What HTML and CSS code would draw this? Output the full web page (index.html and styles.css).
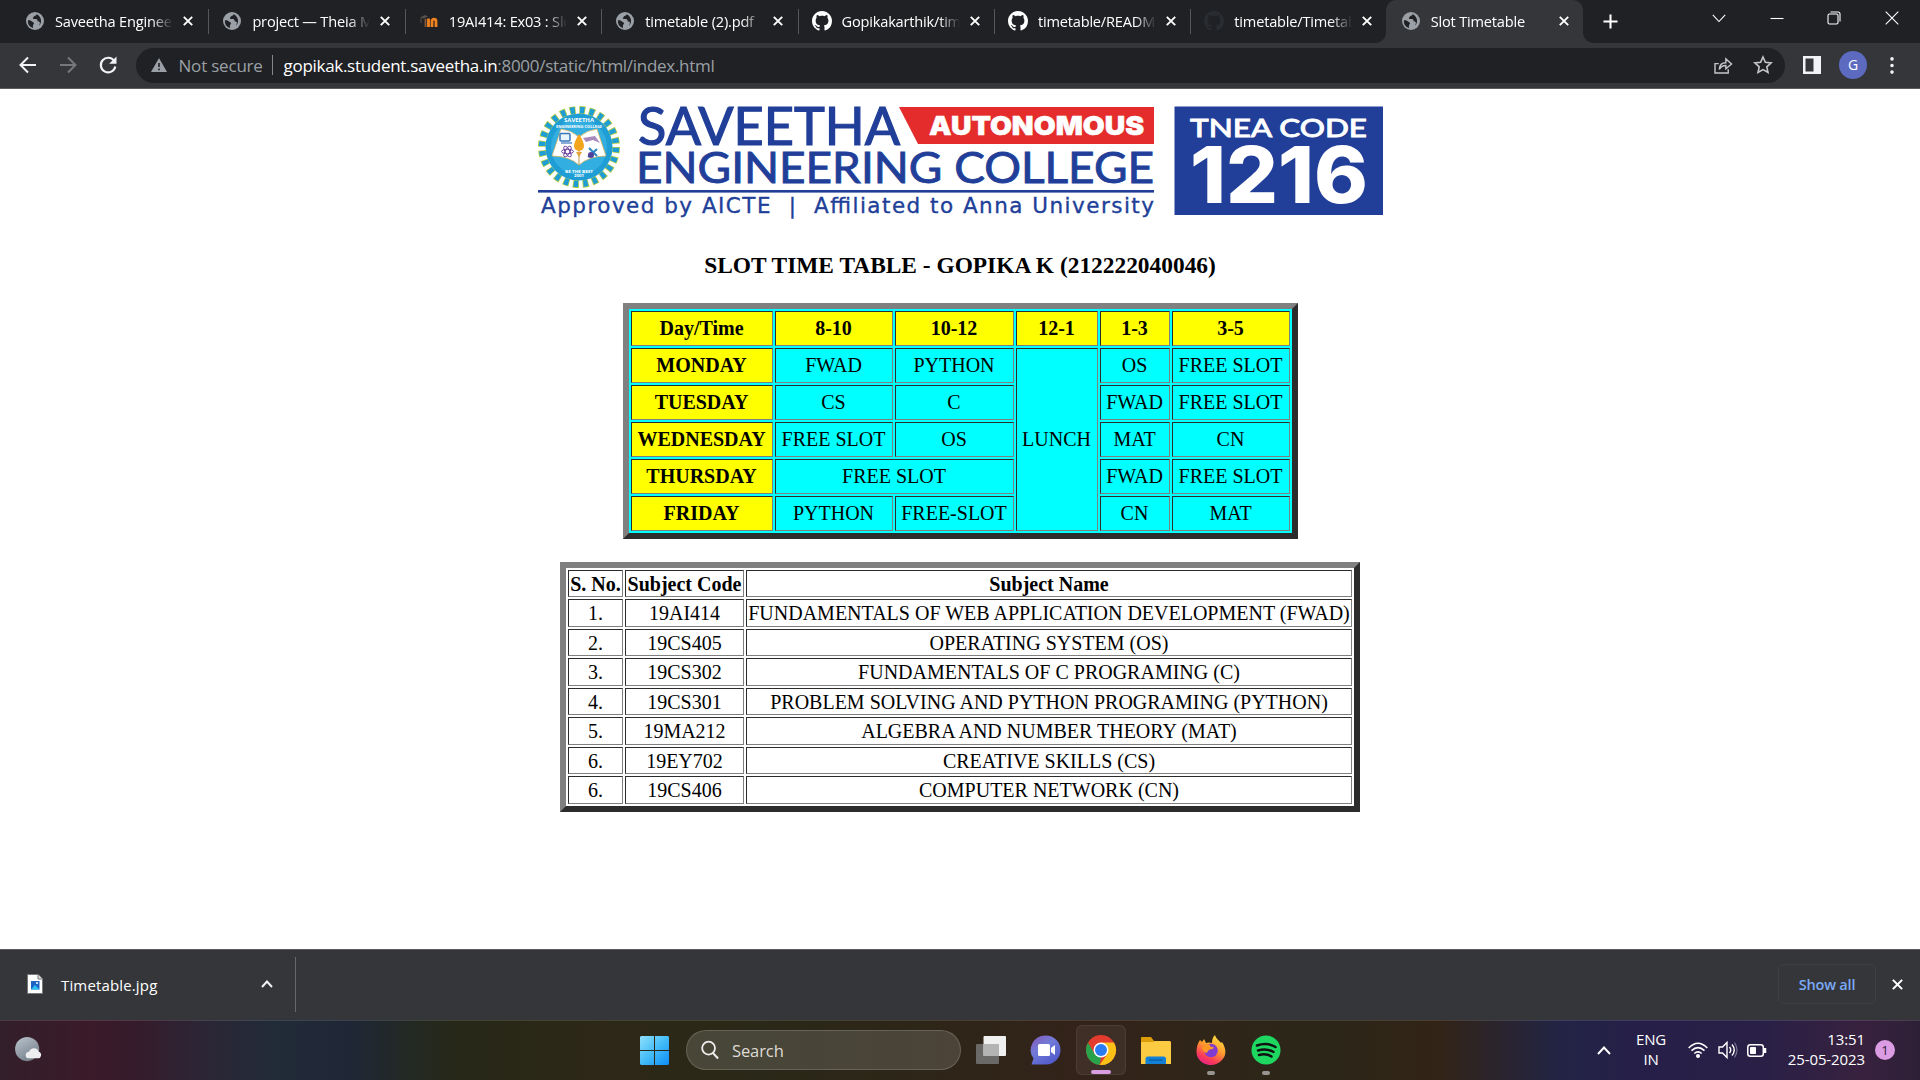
FILE: index.html
```html
<!DOCTYPE html>
<html lang="en">
<head>
<meta charset="utf-8">
<title>Slot Timetable</title>
<link rel="stylesheet" href="styles.css">
</head>
<body>
<svg class="defs" aria-hidden="true">
  <symbol id="globe" viewBox="0 0 18 18"><circle cx="9" cy="9" r="9" fill="#9aa0a6"/><path d="M2 8.2c1.8-.1 3 .3 4 1.300.8.8 2 .8 2 2-.1 1-1.200 1.200-1.100 2.300l.1 2.100A7.200 7.200 0 0 1 2 8.200zM10.500 2.200c-.2 1-1 1.500-2 1.700-.9.2-.6 1.200-1.300 1.700-.6.5-.4 1.400.6 1.400h2.400c1 .1 1.400 1 1.400 1.800 0 .7.700.9 1.400.9.800 0 1.100.8.800 1.500l-.7 2.600A7.200 7.200 0 0 0 10.500 2.200z" fill="#202124"/></symbol>
  <symbol id="github" viewBox="0 0 16 16"><path d="M8 0C3.58 0 0 3.58 0 8c0 3.540 2.290 6.530 5.470 7.590.4.070.55-.17.55-.38 0-.19-.01-.82-.01-1.490-2.010.37-2.530-.49-2.690-.94-.09-.23-.48-.94-.82-1.130-.28-.15-.68-.52-.01-.53.63-.01 1.080.58 1.230.82.72 1.210 1.870.87 2.330.66.07-.52.28-.87.51-1.070-1.780-.2-3.640-.89-3.640-3.950 0-.87.31-1.590.82-2.150-.08-.2-.36-1.020.08-2.120 0 0 .67-.21 2.200.82.64-.18 1.320-.27 2-.27s1.360.09 2 .27c1.530-1.040 2.200-.82 2.200-.82.44 1.100.16 1.920.08 2.120.51.56.82 1.270.82 2.150 0 3.070-1.870 3.750-3.650 3.950.29.25.54.73.54 1.480 0 1.070-.01 1.930-.01 2.200 0 .21.15.46.55.38A8.010 8.010 0 0 0 16 8c0-4.420-3.580-8-8-8z" fill="currentColor"/></symbol>
  <symbol id="x" viewBox="0 0 10 10"><path d="M.8.8l8.400 8.400M9.200.8L.8 9.200" stroke="currentColor" stroke-width="1.900" fill="none"/></symbol>
</svg>

<header class="tabs">
  <div class="tab first"><svg class="fav"><use href="#globe"/></svg><span class="title">Saveetha Engineering</span><svg class="close"><use href="#x"/></svg></div>
  <div class="tab"><svg class="fav"><use href="#globe"/></svg><span class="title">project — Theia Mini</span><svg class="close"><use href="#x"/></svg></div>
  <div class="tab"><svg class="fav" viewBox="0 0 18 18"><path d="M0 5.500L5 3l3 1.500-4 2z" fill="#55504c"/><path d="M1 6v5" stroke="#55504c"/><path d="M5.500 15V7" fill="none" stroke="#8b5a35" stroke-width="1.800"/><path d="M8.500 15V6.500M12 15V9.200q0-2 2-2t2 2V15" fill="none" stroke="#f08220" stroke-width="2.800"/></svg><span class="title">19AI414: Ex03 : Slot</span><svg class="close"><use href="#x"/></svg></div>
  <div class="tab"><svg class="fav"><use href="#globe"/></svg><span class="title">timetable (2).pdf</span><svg class="close"><use href="#x"/></svg></div>
  <div class="tab"><svg class="fav hub"><use href="#github"/></svg><span class="title">Gopikakarthik/timetable</span><svg class="close"><use href="#x"/></svg></div>
  <div class="tab"><svg class="fav hub"><use href="#github"/></svg><span class="title">timetable/README</span><svg class="close"><use href="#x"/></svg></div>
  <div class="tab last"><svg class="fav hub dim"><use href="#github"/></svg><span class="title">timetable/Timetable</span><svg class="close"><use href="#x"/></svg></div>
  <div class="tab active"><svg class="fav"><use href="#globe"/></svg><span class="title">Slot Timetable</span><svg class="close"><use href="#x"/></svg></div>
  <svg class="plus" viewBox="0 0 16 16"><path d="M8 .5v15M.5 8h15" stroke="#fff" stroke-width="2.200"/></svg>
  <div class="window">
    <svg viewBox="0 0 14 14"><path d="M.8 3.800L7 10.500l6.200-6.700"/></svg>
    <svg viewBox="0 0 14 14"><path d="M.5 7.500h13"/></svg>
    <svg viewBox="0 0 14 14"><rect x="1" y="3" width="10" height="10" rx="1.500"/><path d="M3.500 1h7.500q2 0 2 2v7.500"/></svg>
    <svg viewBox="0 0 14 14"><path d="M.7.7l12.600 12.600M13.300.7L.7 13.300"/></svg>
  </div>
</header>

<nav class="toolbar">
  <svg class="nav" viewBox="0 0 18 18"><path d="M17 9H2M9 1.500L1.500 9 9 16.500" stroke="#f1f3f4" stroke-width="2" fill="none"/></svg>
  <svg class="nav" viewBox="0 0 18 18"><path d="M1 9h15M9 1.500L16.500 9 9 16.500" stroke="#76787c" stroke-width="2" fill="none"/></svg>
  <svg class="nav" viewBox="0 0 18 18"><path d="M15.200 5A7.300 7.300 0 1 0 16.300 10.500" stroke="#f1f3f4" stroke-width="2.100" fill="none"/><path d="M17.500.5v7.300h-7.300z" fill="#f1f3f4"/></svg>
  <div class="omnibox">
    <svg class="warn" viewBox="0 0 16 14"><path d="M8 0l8 14H0z" fill="#9aa0a6"/><path d="M8 5v4M8 10.500v1.800" stroke="#202124" stroke-width="1.600"/></svg>
    <span class="insecure">Not secure</span>
    <span class="bar"></span>
    <span class="url"><b>gopikak.student.saveetha.in</b>:8000/static/html/index.html</span>
    <svg class="share" viewBox="0 0 20 18"><path d="M5 7H1v10h14v-4M5.500 13q.5-7 7-7V2l6 5.500-6 5V9q-4.500 0-7 4z" fill="none" stroke="#c4c7ca" stroke-width="1.500"/></svg>
    <svg class="star" viewBox="0 0 20 20"><path d="M10 2l2.400 5.300 5.700.6-4.300 3.900 1.200 5.700-5-2.900-5 2.900 1.200-5.700L1.900 7.900l5.700-.6z" fill="none" stroke="#c4c7ca" stroke-width="1.600"/></svg>
  </div>
  <svg class="panel" viewBox="0 0 18 18"><path d="M0 0h18v18H0zM2.500 2.500v13h8v-13z" fill="#f1f3f4" fill-rule="evenodd"/></svg>
  <span class="avatar">G</span>
  <svg class="dots" viewBox="0 0 4 18"><path d="M2 2h0M2 9h0M2 16h0" stroke="#f1f3f4" stroke-width="3.800" stroke-linecap="round"/></svg>
</nav>

<main class="page">
  <svg class="banner" viewBox="530 98 860 126">
    <g>
      <circle cx="579" cy="147" r="37" fill="none" stroke="#b8cf45" stroke-width="8" stroke-dasharray="6 3.687"/>
      <circle cx="579" cy="147" r="37" fill="none" stroke="#1f9dd5" stroke-width="6.400" stroke-dasharray="4.400 5.287" stroke-dashoffset="-.8"/>
      <circle cx="579" cy="147" r="33.500" fill="#1f9dd5"/>
      <circle cx="579" cy="147" r="28" fill="#33aee0"/>
      <path d="M579 137q-8-7-18-8l-9 27q17 0 27 9 10-9 27-9l-9-27q-10 1-18 8z" fill="#fff" stroke="#d4b565" stroke-width=".8"/>
      <path d="M579 137v28" stroke="#c0954a"/>
      <path d="M579 134q-5 8-5 12a5 5 0 0 0 10 0q0-4-5-12z" fill="#f3a51e"/><path d="M576 152l3 5 3-5z" fill="#e5a33b"/>
      <rect x="560" y="133.500" width="10" height="7.500" rx="1" fill="#e9f6fc" stroke="#3977bc" stroke-width="1.500"/><path d="M561 143h11" stroke="#3977bc" stroke-width="1.200"/>
      <g fill="none" stroke="#64359a" stroke-width=".9"><ellipse cx="567.500" cy="151.500" rx="6" ry="2.200"/><ellipse cx="567.500" cy="151.500" rx="6" ry="2.200" transform="rotate(60 567.500 151.500)"/><ellipse cx="567.500" cy="151.500" rx="6" ry="2.200" transform="rotate(120 567.500 151.500)"/></g>
      <path d="M583 138l12-2 5 7-7-3-7 2z" fill="#8b62a8" opacity=".75"/>
      <path d="M589 148l8 8M597 149l-9 8" stroke="#2a83c5" stroke-width="2"/><circle cx="591" cy="155" r="3" fill="#51409b"/>
      <g class="seal"><text x="564" y="122" textLength="30" lengthAdjust="spacingAndGlyphs">SAVEETHA</text><text x="556" y="127.500" class="tiny" textLength="46" lengthAdjust="spacingAndGlyphs">ENGINEERING COLLEGE</text><text x="565" y="172.500" class="tiny" textLength="28" lengthAdjust="spacingAndGlyphs">BE THE BEST</text><text x="574" y="177" class="tiny" textLength="10" lengthAdjust="spacingAndGlyphs">2001</text></g>
    </g>
    <g fill="#213f99">
      <text class="name" x="638" y="145" textLength="262" lengthAdjust="spacingAndGlyphs">SAVEETHA</text>
      <text class="college" x="636" y="183" textLength="518" lengthAdjust="spacingAndGlyphs">ENGINEERING COLLEGE</text>
      <rect x="538" y="190" width="616" height="2.600"/>
      <text class="approved" x="541" y="213" textLength="613">Approved by AICTE&#160; |&#160; Affiliated to Anna University</text>
      <rect x="1174.500" y="106.500" width="208.500" height="108.500"/>
    </g>
    <path d="M899 107h255v37H918z" fill="#e32c2b"/>
    <g fill="#fff">
      <text class="auto" x="929" y="135" textLength="215" lengthAdjust="spacingAndGlyphs">AUTONOMOUS</text>
      <text class="tnea" x="1190" y="136.500" textLength="177" lengthAdjust="spacingAndGlyphs">TNEA CODE</text>
      <text class="code" x="1190" y="203" textLength="178" lengthAdjust="spacingAndGlyphs">1216</text>
    </g>
  </svg>

  <h1>SLOT TIME TABLE - GOPIKA K (212222040046)</h1>

  <table class="slots">
    <colgroup><col class="c142"><col class="c118"><col class="c119"><col class="c82"><col class="c70"><col class="c118"></colgroup>
    <tr><th>Day/Time</th><th>8-10</th><th>10-12</th><th>12-1</th><th>1-3</th><th>3-5</th></tr>
    <tr><th>MONDAY</th><td>FWAD</td><td>PYTHON</td><td rowspan="5">LUNCH</td><td>OS</td><td>FREE SLOT</td></tr>
    <tr><th>TUESDAY</th><td>CS</td><td>C</td><td>FWAD</td><td>FREE SLOT</td></tr>
    <tr><th>WEDNESDAY</th><td>FREE SLOT</td><td>OS</td><td>MAT</td><td>CN</td></tr>
    <tr><th>THURSDAY</th><td colspan="2">FREE SLOT</td><td>FWAD</td><td>FREE SLOT</td></tr>
    <tr><th>FRIDAY</th><td>PYTHON</td><td>FREE-SLOT</td><td>CN</td><td>MAT</td></tr>
  </table>

  <table class="subjects">
    <colgroup><col class="c55"><col class="c119"><col class="c606"></colgroup>
    <tr><th>S. No.</th><th>Subject Code</th><th>Subject Name</th></tr>
    <tr><td>1.</td><td>19AI414</td><td>FUNDAMENTALS OF WEB APPLICATION DEVELOPMENT (FWAD)</td></tr>
    <tr><td>2.</td><td>19CS405</td><td>OPERATING SYSTEM (OS)</td></tr>
    <tr><td>3.</td><td>19CS302</td><td>FUNDAMENTALS OF C PROGRAMING (C)</td></tr>
    <tr><td>4.</td><td>19CS301</td><td>PROBLEM SOLVING AND PYTHON PROGRAMING (PYTHON)</td></tr>
    <tr><td>5.</td><td>19MA212</td><td>ALGEBRA AND NUMBER THEORY (MAT)</td></tr>
    <tr><td>6.</td><td>19EY702</td><td>CREATIVE SKILLS (CS)</td></tr>
    <tr><td>6.</td><td>19CS406</td><td>COMPUTER NETWORK (CN)</td></tr>
  </table>
</main>

<section class="downloads">
  <svg class="file" viewBox="0 0 16 20"><path d="M.5.5h10.500l4.500 4.500v14.500H.5z" fill="#fff" stroke="#777"/><path d="M11 .5V5h4.500" fill="#ddd" stroke="#777"/><rect x="4" y="7" width="8.500" height="8.500" fill="#1e62c4"/><path d="M4 15.500l4-4.500 4.500 4.500z" fill="#28c3f3"/><circle cx="10" cy="9" r="1" fill="#fff"/></svg>
  <span class="filename">Timetable.jpg</span>
  <svg class="up" viewBox="0 0 12 8"><path d="M1 7l5-5.500L11 7" fill="none" stroke="#f1f3f4" stroke-width="2"/></svg>
  <span class="rule"></span>
  <button class="showall">Show all</button>
  <svg class="dismiss"><use href="#x"/></svg>
</section>

<footer class="taskbar">
  <svg class="weather" viewBox="0 0 30 28"><defs><linearGradient id="moon" x2=".6" y2="1"><stop stop-color="#bcc5ce"/><stop offset="1" stop-color="#76818c"/></linearGradient></defs><circle cx="13" cy="13" r="13" fill="url(#moon)"/><path d="M14 23q-3-1-2.500-4t3.500-3q1.500-4 5.500-4t5 4q3 1 2.500 4t-3 3z" fill="#eceef0"/></svg>
  <div class="apps">
    <svg class="start" viewBox="0 0 29 29"><defs><linearGradient id="win" x2="1" y2="1"><stop stop-color="#8ee0fb"/><stop offset=".5" stop-color="#45bdf8"/><stop offset="1" stop-color="#0c8cf6"/></linearGradient></defs><path d="M1 0h13v14H0V1zM15 0h13l1 1v13H15zM0 15h14v14H1l-1-1zM15 15h14v13l-1 1H15z" fill="url(#win)"/></svg>
    <div class="search"><svg viewBox="0 0 19 20"><circle cx="8" cy="8" r="6.800" fill="none" stroke="#eee" stroke-width="1.900"/><path d="M12.500 13l5.500 6" stroke="#eee" stroke-width="2.200"/></svg><span>Search</span></div>
    <svg class="app" viewBox="0 0 30 30"><rect y="9" width="23" height="20" rx="1" fill="#6a6967"/><rect x="7.500" y="1" width="22.500" height="20" rx="1" fill="#f0f0f0"/><path d="M7.500 9H23v12H7.500z" fill="#b4b4b4"/></svg>
    <svg class="app chat" viewBox="0 0 30 30"><defs><linearGradient id="chat" x1="0" y1="0" x2=".7" y2="1"><stop stop-color="#8756b5"/><stop offset=".45" stop-color="#727bd8"/><stop offset="1" stop-color="#5059c9"/></linearGradient></defs><path d="M15 .5a14.500 14.500 0 0 1 0 29H.5l2-6A14.500 14.500 0 0 1 15 .5z" fill="url(#chat)"/><rect x="7" y="9" width="12" height="12" rx="1.500" fill="#fff"/><path d="M20 13l4-3v10l-4-3z" fill="#fff"/></svg>
    <div class="current"><svg class="app" viewBox="0 0 30 30"><circle cx="15" cy="15" r="15" fill="#e33b2e"/><path d="M2 7.500l6.500 11.300L15 22.500 13.500 30A15 15 0 0 1 2 7.500z" fill="#29a34b"/><path d="M28 7.500H15l6.500 11.300L13.500 30A15 15 0 0 0 28 7.500z" fill="#fbc116"/><circle cx="15" cy="15" r="7.500" fill="#fff"/><circle cx="15" cy="15" r="6" fill="#2a7cf0"/></svg><i></i></div>
    <svg class="app" viewBox="0 0 30 30"><path d="M0 3q0-1 1-1h9l3 4h16v7H0z" fill="#dc9d08"/><path d="M0 8q0-1 1-1h11l2-1h15l1 1v22H0z" fill="#fccb41"/><path d="M4.500 29v-5q0-2.500 2.500-2.500h15.500q2.500 0 2.500 2.500v5z" fill="#1280d5"/><path d="M8 25h13.500" stroke="#075291"/></svg>
    <div class="running"><svg class="app" viewBox="0 0 30 30"><defs><linearGradient id="fox" x1=".8" y1="0" x2=".3" y2="1"><stop stop-color="#ffe545"/><stop offset=".45" stop-color="#ff9b2d"/><stop offset=".8" stop-color="#fa385b"/><stop offset="1" stop-color="#e62388"/></linearGradient></defs><path d="M4 5l2 2 2-3 2 4q3-1 6 0c0-4 1-6 3-8 1 4 5 6 6 8l1-1c4 6 5 13 0 18-7 8-19 6-24-2C-1 17 1 9 4 5z" fill="url(#fox)"/><circle cx="15" cy="15.500" r="6.800" fill="#823bd0"/><path d="M6 12l7-3 2 3q4-1 2 2-5 0-6 4-5-1-5-6z" fill="#ff9726"/></svg><i></i></div>
    <div class="running"><svg class="app" viewBox="0 0 30 30"><circle cx="15" cy="15" r="14.500" fill="#1ed760"/><path d="M6 10.500q10-3.500 18.500 1.500M7 15.500q8.500-2.500 15.500 1.500M8 20q7-2 12.500 1.500" fill="none" stroke="#111" stroke-width="2.500" stroke-linecap="round"/></svg><i></i></div>
  </div>
  <div class="tray">
    <svg class="trayup" viewBox="0 0 14 9"><path d="M1 8l6-6.500L13 8" fill="none" stroke="#fff" stroke-width="1.900"/></svg>
    <div class="lang">ENG<br>IN</div>
    <svg class="wifi" viewBox="0 0 20 16"><g fill="none" stroke="#fff" stroke-width="1.600"><path d="M.7 6Q10-3.500 19.300 6M3.500 8.700q6.500-6 13 0M6.300 11.500q3.700-3.300 7.400 0"/></g><circle cx="10" cy="14" r="2" fill="#fff"/></svg>
    <svg class="sound" viewBox="0 0 20 18"><path d="M1 6h3.500L9 1.500v15L4.500 12H1z" fill="none" stroke="#fff" stroke-width="1.400"/><path d="M11.500 6q2.500 3 0 6M14 3.500q4.500 5.500 0 11" fill="none" stroke="#fff" stroke-width="1.400"/><path d="M16.500 1.500q5 7.500 0 15" fill="none" stroke="#777391" stroke-width="1.200"/></svg>
    <svg class="battery" viewBox="0 0 20 13"><rect x=".8" y=".8" width="15.500" height="11.400" rx="2.500" fill="none" stroke="#fff" stroke-width="1.500"/><rect x="3" y="3" width="6" height="7" rx=".8" fill="#fff"/><path d="M18 4v5" stroke="#fff" stroke-width="2.500"/></svg>
    <div class="clock">13:51<br>25-05-2023</div>
    <span class="badge">1</span>
  </div>
</footer>
</body>
</html>
```
FILE: styles.css
```css
* { box-sizing: border-box; }
html, body { margin: 0; height: 100%; overflow: hidden; }
body { display: flex; flex-direction: column; background: #fff; font-family: "Open Sans", "Noto Sans", sans-serif; }
svg { display: block; flex: none; overflow: visible; }
.defs { position: absolute; width: 0; height: 0; }

/* tab strip */
.tabs { flex: none; height: 43px; display: flex; align-items: center; padding-left: 11px; background: #202124; color: #fff; }
.tab { position: relative; flex: none; width: 196.4px; height: 43px; display: flex; align-items: center; padding: 0 0 2px 16px; }
.tab.first { padding-left: 15px; }
.tab::after { content: ""; position: absolute; right: -2px; top: 9px; width: 1px; height: 25px; background: #55575b; }
.tab.last::after { display: none; }
.fav { width: 18px; height: 18px; }
.hub { width: 20px; height: 20px; margin: 0 -1px; color: #fff; }
.dim { color: #292d31; }
.title { width: 118px; margin-left: 11px; overflow: hidden; white-space: nowrap; font-size: 14.6px; line-height: 24px; letter-spacing: -.2px; mask-image: linear-gradient(90deg, #000 82%, transparent); }
.close { width: 10px; height: 10px; margin-left: 10px; color: #fff; }
.active { width: 197.500px; background: #35363a; border-radius: 10px 10px 0 0; }
.active::before, .active::after { content: ""; position: absolute; top: auto; bottom: 0; width: 10px; height: 10px; }
.active::before { left: -10px; background: radial-gradient(circle at 0 0, #202124 9.5px, #35363a 10px); }
.active::after { right: -10px; background: radial-gradient(circle at 100% 0, #202124 9.5px, #35363a 10px); }
.plus { width: 15px; height: 15px; margin-left: 19.500px; }
.window { flex: 1; display: flex; justify-content: flex-end; gap: 43.500px; padding: 0 21.500px 7px 0; }
.window svg { width: 14px; height: 14px; fill: none; stroke: #fff; stroke-width: 1.1; }

/* toolbar */
.toolbar { flex: none; height: 46px; display: flex; align-items: center; padding: 0 26px 1px 18.500px; background: #35363a; border-bottom: 1px solid #5b5c5f; }
.nav { width: 18px; height: 18px; margin-right: 22px; }
.omnibox { width: 1650px; height: 35px; margin-left: -3px; border-radius: 18px; background: #202124; display: flex; align-items: center; padding-left: 15px; font-size: 17px; color: #9aa0a6; }
.warn { width: 16px; height: 14px; margin-right: 12px; }
.insecure { width: 88px; letter-spacing: -.2px; white-space: nowrap; }
.bar { width: 1px; height: 20px; margin: 0 11px 0 5px; background: #85878b; }
.url { flex: 1; white-space: nowrap; letter-spacing: -.29px; }
.url b { color: #fff; font-weight: 400; }
.share { width: 19px; height: 17px; margin-right: 20px; }
.star { width: 20px; height: 20px; margin-right: 12.500px; }
.panel { width: 18px; height: 18px; margin-left: 18px; }
.avatar { flex: none; width: 28px; height: 28px; margin-left: 18px; border-radius: 50%; background: #5c6bc0; color: #fff; font-size: 14px; line-height: 28px; text-align: center; }
.dots { width: 4px; height: 17px; margin-left: 23px; }

/* college page */
.page { flex: none; height: 860px; display: flex; flex-direction: column; align-items: center; padding-top: 9px; font-family: "Liberation Serif", "Times New Roman", serif; color: #000; }
.banner { width: 860px; height: 126px; }
.name { font: 400 52px Lato, sans-serif; stroke: #213f99; stroke-width: 1.2; }
.college { font: 400 43px Lato, sans-serif; stroke: #213f99; stroke-width: .9; }
.approved { font: 400 21.500px "DejaVu Sans", sans-serif; stroke: #213f99; stroke-width: .35; }
.auto { font: 900 26px Inter, sans-serif; stroke: #fff; stroke-width: .5; }
.tnea { font: 500 25.500px Lato, sans-serif; stroke: #fff; stroke-width: .8; }
.code { font: 800 78px Inter, sans-serif; }
.seal { fill: #fff; font: 700 5.500px "Open Sans", sans-serif; }
.tiny { font-size: 4px; }
h1 { margin: 27px 0 24px; font-size: 23.4px; line-height: 28px; font-weight: 700; }
table { flex: none; table-layout: fixed; border-collapse: separate; border-spacing: 2px; border: 6px solid; border-color: #808080 #2c2c2c #2c2c2c #808080; font-size: 20px; line-height: 22px; text-align: center; }
th, td { padding: 0; border: 1px solid; border-color: #2c2c2c #808080 #808080 #2c2c2c; white-space: nowrap; }
.slots { width: 675px; background: #0ff; margin-bottom: 23px; }
.slots tr { height: 35px; }
.slots th, .slots td { padding-bottom: 1px; }
.slots th { background: #ff0; }
.subjects { width: 800px; }
.subjects tr { height: 27px; }
.subjects tr:nth-child(even) { height: 28px; }
.c55 { width: 55px; } .c70 { width: 70px; } .c82 { width: 82px; }
.c118 { width: 118px; } .c119 { width: 119px; } .c142 { width: 142px; } .c606 { width: 606px; }

/* download shelf */
.downloads { flex: none; height: 71px; display: flex; align-items: center; padding: 0 17px 2px 27px; background: #35363a; border-top: 1px solid #5b5c5f; color: #fff; font-size: 15px; }
.file { width: 16px; height: 20px; }
.filename { width: 199.500px; margin-left: 18px; padding-top: 1px; letter-spacing: .15px; }
.up { width: 12px; height: 8px; }
.rule { width: 1px; height: 55px; margin-left: 22.500px; background: #66686c; }
.showall { width: 98px; height: 40px; margin-left: auto; padding: 0; border: 1px solid #3d3f43; border-radius: 5px; background: none; color: #7baaf7; font: 600 14.500px "Open Sans", sans-serif; letter-spacing: -.2px; }
.dismiss { width: 11px; height: 11px; margin-left: 16px; }

/* taskbar */
.taskbar { flex: none; height: 60px; display: flex; align-items: center; padding: 0 25px 1px 15px; border-top: 1px solid rgba(255,255,255,.12); color: #fff; background: linear-gradient(90deg, #321f2a 0, #3b1a29 90px, #351c2c 140px, #2b2636 205px, #222b38 270px, #1f2736 350px, #232923 410px, #272818 460px, #2d2817 600px, #2a2818 760px, #2d2618 900px, #33231a 1080px, #302519 1200px, #2b2618 1320px, #322417 1440px, #2b242a 1490px, #222445 1560px, #261f48 1640px, #2a2046 1770px, #38213f 1860px, #2d2036 1920px); }
.weather { width: 28px; height: 26px; }
.apps { display: flex; align-items: center; margin-left: 597px; }
.start { width: 29px; height: 29px; }
.search { width: 275px; height: 40px; margin: 0 15px 0 17px; padding-left: 14px; border: 1px solid rgba(255,255,255,.16); border-radius: 20px; background: rgba(255,255,255,.14); display: flex; align-items: center; font-size: 16.500px; letter-spacing: -.1px; color: #dedbd5; }
.search svg { width: 18px; height: 20px; margin-right: 13px; }
.app { width: 30px; height: 30px; }
.chat { margin-left: 25px; }
.current, .running { position: relative; display: flex; align-items: center; justify-content: center; height: 50px; }
.current { width: 50px; margin: 0 15px; border: 1px solid rgba(255,255,255,.07); border-radius: 6px; background: rgba(255,255,255,.06); }
.running { margin-left: 25px; }
.current i, .running i { position: absolute; left: 50%; bottom: 0; width: 20px; height: 4px; margin-left: -10px; border-radius: 2px; background: #d89de0; }
.running i { width: 8px; margin-left: -4px; background: #989590; }
.tray { flex: 1; display: flex; align-items: center; justify-content: flex-end; font-size: 15px; line-height: 20px; }
.trayup { width: 14px; height: 9px; }
.lang { width: 50px; margin: 0 12px 0 15px; padding-bottom: 2px; text-align: center; letter-spacing: -.2px; }
.wifi { width: 20px; height: 16px; margin-right: 10px; }
.sound { width: 20px; height: 18px; margin-right: 9px; }
.battery { width: 20px; height: 13px; }
.clock { width: 91px; margin-left: 7px; padding-bottom: 3px; text-align: right; letter-spacing: -.1px; white-space: nowrap; }
.badge { width: 20px; height: 20px; margin-left: 10px; border-radius: 50%; background: #dc9ce4; color: #33213c; font-size: 13px; line-height: 20px; text-align: center; }
```
